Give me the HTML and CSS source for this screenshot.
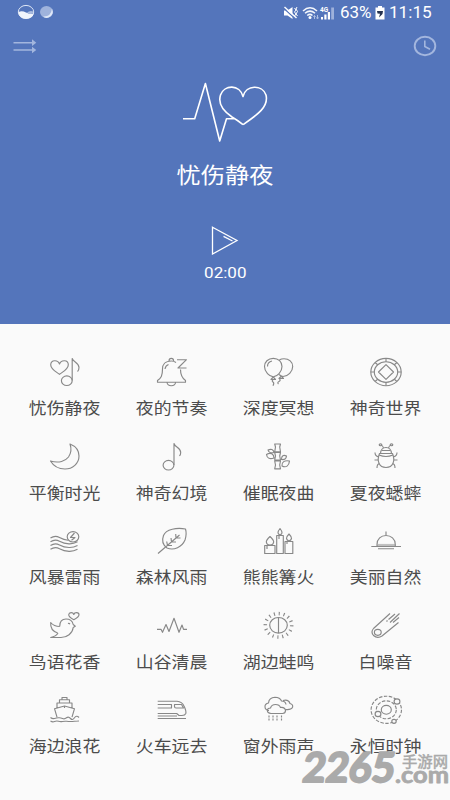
FILE: index.html
```html
<!DOCTYPE html>
<html lang="zh-CN">
<head>
<meta charset="utf-8">
<title>忧伤静夜</title>
<link rel="stylesheet" href="styles.css">
</head>
<body>
<div class="app">
  <header class="hero">
    <div class="status">
      <svg class="status-left" width="40" height="18" viewBox="0 0 40 18">
        <ellipse cx="10" cy="9" rx="7.7" ry="6.6" fill="none" stroke="#dfe7f6" stroke-width="1"/>
        <path d="M2.500 9Q6 7.500 10 9.500Q14 11.500 17.500 10.500Q17 15.500 10 15.800Q3 15.500 2.500 9Z" fill="#f1f5fc"/>
        <path d="M11 9.500Q14 7 17.500 8.500Q17 11.500 14 11Z" fill="#a9bbdf"/>
        <ellipse cx="30.500" cy="9" rx="6.500" ry="6" fill="#9fb3dc"/>
        <path d="M36 5.500Q38.500 12 32.500 14.600Q29 15.500 27 13.500Q35 14 36 5.500Z" fill="#dfe8f8"/>
      </svg>
      <div class="status-right">
        <svg class="status-icons" width="53" height="16" viewBox="0 0 53 16">
          <path d="M1 5.500h3.500L9.500 2v12L4.500 10.500H1Z" fill="#fff"/>
          <path d="M1 3.500L12.500 14" stroke="#5475bb" stroke-width="1.200"/>
          <path d="M1.500 2L13.500 13" stroke="#fff" stroke-width="1.400"/>
          <path d="M11.500 3l1.500 2-1.500 2 1.500 2-1.500 2M14 2l-1 2 1.500 2.500L13 9l1.500 2" fill="none" stroke="#fff" stroke-width="1"/>
          <path d="M20 6Q27 -0.500 34 6M22 8.300Q27 4 32 8.300M24.200 10.500Q27 8.300 29.500 10.500" fill="none" stroke="#f4f7fc" stroke-width="1.500"/>
          <circle cx="27" cy="12.500" r="1.500" fill="#fff"/>
          <path d="M31.500 14V10.500M30.500 12l1 -1.500 1 1.500M34.500 10v3.500M33.500 12.500l1 1.500 1-1.500" fill="none" stroke="#aebfe2" stroke-width="1"/>
          <text x="37" y="6.500" class="network">4G</text>
          <path d="M38 14.500v-2.500h2v2.500zM41.300 14.500V9.500h2.200v5zM44.800 14.500V7h2.200v7.500z" fill="#fff"/>
          <path d="M48.200 14.500V2.500H51v12z" fill="#9eb1db"/>
        </svg>
        <span class="battery-level">63%</span>
        <svg class="battery" width="10" height="14" viewBox="0 0 10 14">
          <path d="M3 0h4v1.500h2.500V13.500H0.500V1.500H3Z" fill="#fff"/>
          <path d="M2 5L8 5L7.500 8L4 11.500L5 7.800L2.500 7.500Z" fill="#26324f"/>
        </svg>
        <span class="clock">11:15</span>
      </div>
    </div>
    <nav class="toolbar">
      <svg width="24" height="16" viewBox="0 0 24 16">
        <path d="M0.500 4.700H20M0.500 12H20" stroke="#a3b6de" stroke-width="1.500"/>
        <path d="M19 1.300L23.300 4.700L19 8ZM19 8.700L23.300 12L19 15.300Z" fill="#a3b6de"/>
      </svg>
      <svg width="24" height="22" viewBox="0 0 24 22">
        <ellipse cx="12" cy="11" rx="10.300" ry="9.300" fill="none" stroke="#a3b6de" stroke-width="1.900"/>
        <path d="M11.800 5.500V11.500L17 14.200" fill="none" stroke="#a3b6de" stroke-width="1.600"/>
      </svg>
    </nav>
    <svg class="pulse" width="90" height="64" viewBox="0 0 90 64">
      <path d="M3 38.700H14.700L25.400 3.500L39.700 61L46.500 38.700H55M63 44.700Q58 40.500 52 37C43 31 38 23 40.500 15C44 4.500 60 4 63 16.500C66 4.500 82.500 4.500 86 15C89 27 77 35 63 44.700"/>
    </svg>
    <h1 class="title">忧伤静夜</h1>
    <svg class="play" width="30" height="30" viewBox="0 0 30 30">
      <path d="M2.500 2.200L27 15.500L2.500 29ZM13.500 11.300L22.500 16"/>
    </svg>
    <div class="time">02:00</div>
  </header>

  <main class="grid">
    <div class="item">
      <svg class="icon" viewBox="0 0 36 32"><path d="M12.500 18.300C8 15 3.700 13 3.700 8.700C4 3.500 11 3.500 12.500 8C14 3.500 21.300 3.500 21.300 8.700C21.300 13 17 15 12.500 18.300ZM25.200 24.500V2.500C26 6 32 6.500 32 11.500Q32 14 30.500 15.500"/><ellipse cx="19.800" cy="24.700" rx="5.400" ry="4.800"/></svg>
      <span class="label">忧伤静夜</span>
    </div>
    <div class="item">
      <svg class="icon" viewBox="0 0 36 32"><path d="M22 6.500Q20 5 17.300 5C11 5 8.500 9 8.500 13C8.500 20 7 22 3.500 24.500V26.200H31.500V24.500C28 22 26.500 19.500 26.500 13.500M15 5Q15 2.300 17.300 2.300T19.600 5M13 26.500Q13.500 29.700 17.300 29.700T21.600 26.500M11 13Q11.500 9.500 14.500 8.500M23 3.700H32.500L24 12H32.500"/></svg>
      <span class="label">夜的节奏</span>
    </div>
    <div class="item">
      <svg class="icon" viewBox="0 0 36 32"><path d="M12.300 2.300C7 2.300 3.500 6 3.500 10.500C3.500 16 8.500 20.800 12.300 20.800S21 16 21 10.500C21 6 17.500 2.300 12.300 2.300ZM18.500 3.800Q20.500 2.700 23 2.700C28 2.700 31.700 6 31.700 10.500C31.700 15.500 27 20.300 22 20.500Q20 20.300 18 18.500M6.500 10.500Q6.500 6 11 5M12.300 21L10 23.500H14.500ZM20 20.500L18 22.500H22.500L20.500 20.500M12 23.500Q10.500 25 12 26T12 29.700M18.500 23Q20 24.500 18 25.500T17.500 28"/></svg>
      <span class="label">深度冥想</span>
    </div>
    <div class="item">
      <svg class="icon" viewBox="0 0 36 32"><ellipse cx="18" cy="16" rx="15.200" ry="13.700"/><ellipse cx="18" cy="16" rx="11.700" ry="10.300"/><path d="M18 8.700L25.500 16L18 23.300L10.500 16ZM18 2.300V5.700M18 26.300V29.700M2.800 16H6.300M29.700 16H33.200M7 6.500L9.700 8.700M29 6.500L26.300 8.700M7 25.500L9.700 23.300M29 25.500L26.300 23.300"/></svg>
      <span class="label">神奇世界</span>
    </div>

    <div class="item">
      <svg class="icon" viewBox="0 0 36 32"><path d="M23 3C28 5 32 9 32 15C32 22.500 25.500 28 18 28C11.500 28 6.500 25 3.500 20C12 22.500 18.500 20 21.500 16Q25.500 10 23 3Z"/></svg>
      <span class="label">平衡时光</span>
    </div>
    <div class="item">
      <svg class="icon" viewBox="0 0 36 32"><path d="M20 24V2.500C21 6.500 26.700 6.500 26.700 11.500Q26.700 13.500 25.500 15"/><ellipse cx="14.500" cy="24.200" rx="5.400" ry="4.800"/></svg>
      <span class="label">神奇幻境</span>
    </div>
    <div class="item">
      <svg class="icon" viewBox="0 0 36 32"><path d="M13.700 3H19.500L18.700 6L19.500 10.800H13.700L14.500 6ZM13.700 11.500H19.500L18.700 15L19.500 19H13.700L14.500 15ZM13.700 20H19.500L18.700 24L19.500 27.800H13.700L14.500 24ZM13 11.500C10 12.500 7.500 11.500 7 9C10 7.500 12.500 8.500 13 11.500ZM13 17C9 18.500 6 17.500 5.500 13.500C9.500 11 13 13 13 17ZM20.500 18.500C20.500 14.500 22.500 13.500 25.500 15C25.300 18 23.500 19 20.500 18.500ZM21 25C20.500 21 23.500 19 28.500 20C28 25 25 27 21 25Z"/></svg>
      <span class="label">催眠夜曲</span>
    </div>
    <div class="item">
      <svg class="icon" viewBox="0 0 36 32"><path d="M11.500 12.500C8.500 20 11 26.500 18 26.500S27.500 20 24.500 12.500ZM12.500 12.500Q13 6.500 18 6.500T23.500 12.500M11 14Q18 17 25 14M14 9.500H22M15.500 7Q15 4.500 12.700 4M20.500 7Q21 4.500 23.300 4M10.500 16Q7 15 7 11.500M25.500 16Q29 15 29 11.500M10.200 19H6.500M25.800 19H29.500M11.500 22.500Q9 23 9 27M24.500 22.500Q27 23 27 27"/><ellipse cx="12.500" cy="3.700" rx="1.300" ry="1"/><ellipse cx="23.500" cy="3.700" rx="1.300" ry="1"/></svg>
      <span class="label">夏夜蟋蟀</span>
    </div>

    <div class="item">
      <svg class="icon" viewBox="0 0 36 32"><path d="M3.500 13Q8 10 12.500 12.500T21 15.200M3.500 16.800Q8 13.800 12.500 16.300T22 18.800Q26.500 19 30.500 16.800M3.500 20.500Q8 17.500 12.500 20T22 22.500Q26.500 22.700 30.500 20.500M3.500 24.300Q8 21.300 12.500 23.800T22 26.300Q26.500 26.500 30.500 24.300M27.500 8L23.500 12.500H28L24.500 15.300"/><ellipse cx="26" cy="11.800" rx="5.800" ry="5.200"/></svg>
      <span class="label">风暴雷雨</span>
    </div>
    <div class="item">
      <svg class="icon" viewBox="0 0 36 32"><path d="M4 28.500L25.500 10M31.500 4C23 2.500 12 4 9.500 10.500C7.500 16 9.500 20.500 13 23C20 26 28 22 31 15Q33 9 31.500 4ZM22 13L21.700 9M22 13L26.500 13M17.500 17L17 13M17.500 17L22 17M13.500 20.500L12.700 16.500M13.500 20.500L18 20.500"/></svg>
      <span class="label">森林风雨</span>
    </div>
    <div class="item">
      <svg class="icon" viewBox="0 0 36 32"><path d="M3.700 20.500H14V28.500H3.700ZM15.700 10.500H22.300V28.500H15.700ZM24 16.500H31.800V28.500H24ZM9 11.500Q12.700 15 12.700 17Q12.300 20 9 20T5.300 17Q5.300 15 9 11.500ZM19 3.500Q21 6 21 7.800Q20.700 9.500 19 9.500T17 7.800Q17 6 19 3.500ZM28 9Q30.500 11.500 30.500 13.500Q30 15.700 28 15.700T25.500 13.500Q25.500 11.500 28 9ZM6 21V24M18 11V14M26 17V19"/></svg>
      <span class="label">熊熊篝火</span>
    </div>
    <div class="item">
      <svg class="icon" viewBox="0 0 36 32"><path d="M3.300 21.500H33M10 23.700H26M9 19.500C9 14 13 10.500 18 10.500S27.300 14 27.300 19.500V21H9ZM18 10.500V6.500"/><path d="M9.500 19.500H27" opacity=".5"/></svg>
      <span class="label">美丽自然</span>
    </div>

    <div class="item">
      <svg class="icon" viewBox="0 0 36 32"><path d="M12.700 16.500C12.500 11.500 15 9 19 9Q25 9 26.200 14.500L28.300 16.200L26.200 17.500C25.500 23.500 20 27.500 14 27.500H3.700Q9 26.500 11 23M10.700 23Q3 20.500 3.700 12.500Q7 16.500 12.700 16.500M26.800 9.700Q21.700 7 21.700 4.800C22 2 26 2 26.800 4.500C27.500 2 32 2 32 4.800Q32 7 26.800 9.700Z"/><path d="M21 13.500Q22 13 23 14"/></svg>
      <span class="label">鸟语花香</span>
    </div>
    <div class="item">
      <svg class="icon" viewBox="0 0 36 32"><path d="M3 19.300H7L8.500 22.300L12 14.500L15 21.500L20 8.300L25 22.300L28 15L29.500 19.300H33"/></svg>
      <span class="label">山谷清晨</span>
    </div>
    <div class="item">
      <svg class="icon" viewBox="0 0 36 32"><ellipse cx="17.500" cy="15.300" rx="8.800" ry="7.800"/><path d="M17.500 7.500V23"/><ellipse class="rays" cx="17.500" cy="15.300" rx="13.200" ry="11.700"/></svg>
      <span class="label">湖边蛙鸣</span>
    </div>
    <div class="item">
      <svg class="icon" viewBox="0 0 36 32"><path d="M5.500 18.500L22 3.500M14 26L30.500 12.500M5.500 18.500Q2.500 22 5.500 25.500Q9.500 29 14 26M20.500 9.500L27 4M22 12.500L31.500 3.500M19.500 10.500L18.500 11.500M25 12.500L31 7.500"/><ellipse cx="9.800" cy="22.300" rx="3.400" ry="3"/></svg>
      <span class="label">白噪音</span>
    </div>

    <div class="item">
      <svg class="icon" viewBox="0 0 36 32"><path d="M10 23.200L7.500 14.700L17.500 12L27.500 14.700L25 23.200M10 13.800V9H25V13.800M12.500 9V5.700H22.500V9M15 5.700V3.500H20V5.700M17.500 12V14M3.500 23.500Q5.500 25 7.500 24.500T11.500 23.800T15.500 24.500T19.500 23.800T23.500 24.500T27.500 23.800T32 23.500M3.500 27Q5.500 28.300 7.500 27.500T11.500 27.300T15.500 27.500T19.500 27.300T23.500 27.500T27.500 27.300T32 27"/></svg>
      <span class="label">海边浪花</span>
    </div>
    <div class="item">
      <svg class="icon" viewBox="0 0 36 32"><path d="M3.700 7.200H23Q28 7.500 30 12Q32.500 17 31.800 19.500Q31 21.500 28 21.500H25L22.700 19.500H3.700M3.700 10.500H17.500V14H3.700M20.500 10.500H27.500L29.500 14H22Q20.500 14 20.500 12.500ZM3.700 22H23M3.700 24.500H32"/></svg>
      <span class="label">火车远去</span>
    </div>
    <div class="item">
      <svg class="icon" viewBox="0 0 36 32"><path d="M8 16.500C3 16 2.500 10 7.500 9Q8 3.500 14 3.300Q19 3.500 20.500 7Q24.500 7 25 10.500M10 19.500C5 19 5.500 14 9.500 14Q10.500 10.500 14.500 10.500Q18.500 10.500 19.500 13.500Q24 13 24.500 16.500Q24.500 19.500 21.500 19.500ZM22 6.500Q27.500 5 29 9.500Q32.500 10.500 31.500 13.500Q30 16 24.800 15.500"/><path class="dots" d="M8 21.500V27.500M12 21.500V27.500M16 21.500V27.500M20.500 21.500V27.500"/></svg>
      <span class="label">窗外雨声</span>
    </div>
    <div class="item">
      <svg class="icon" viewBox="0 0 36 32"><ellipse class="dash" cx="18.300" cy="15.800" rx="15.200" ry="13.600"/><ellipse class="dash" cx="18.300" cy="15.800" rx="10" ry="9"/><ellipse cx="18.300" cy="15.800" rx="5" ry="4.400"/><g class="planet"><ellipse cx="29" cy="7.500" rx="2.900" ry="2.600"/><ellipse cx="10" cy="20" rx="2.900" ry="2.600"/><ellipse cx="26" cy="27.300" rx="2.200" ry="2"/></g></svg>
      <span class="label">永恒时钟</span>
    </div>
  </main>

  <svg class="watermark" width="150" height="44" viewBox="0 0 150 44">
    <text class="wm-num" x="6" y="36" transform="skewX(-7)" textLength="92" lengthAdjust="spacingAndGlyphs">2265</text>
    <text class="wm-cn" x="102" y="20.500" textLength="46" lengthAdjust="spacingAndGlyphs">手游网</text>
    <text class="wm-com" x="95" y="36.500" textLength="54" lengthAdjust="spacingAndGlyphs">.com</text>
  </svg>
</div>
</body>
</html>
```
FILE: styles.css
```css
* { box-sizing: border-box; }

body {
  margin: 0;
  background: #fafafa;
  font-family: Roboto, "Noto Sans CJK SC", sans-serif;
}

.app {
  position: relative;
  width: 450px;
  height: 800px;
  overflow: hidden;
}

.hero {
  display: flex;
  flex-direction: column;
  align-items: center;
  height: 324px;
  background: #5475bb;
  color: #fff;
}

.status {
  display: flex;
  justify-content: space-between;
  width: 100%;
  height: 24px;
  padding: 3px 19px 0 16px;
}

.status-right {
  display: flex;
  align-items: center;
  height: 20px;
  font-size: 16px;
  line-height: 20px;
}

.status-icons { margin-right: 4px; }

.network {
  fill: #fff;
  font-size: 6.5px;
  font-weight: 700;
}

.battery-level {
  width: 35px;
  transform: scaleX(1.06);
  transform-origin: left;
}

.battery { margin-right: 4px; }

.clock {
  width: 42px;
  transform: scaleX(1.07);
  transform-origin: left;
}

.toolbar {
  display: flex;
  align-items: center;
  justify-content: space-between;
  width: 100%;
  height: 22px;
  margin-top: 11px;
  padding: 0 13px;
}

.pulse {
  margin-top: 23px;
  fill: none;
  stroke: #fff;
  stroke-width: 1.6;
  stroke-linejoin: round;
}

.title {
  margin: 17px 0 0;
  font-size: 22px;
  font-weight: 400;
  line-height: 30px;
  transform: scaleX(1.1);
}

.play {
  margin-top: 34px;
  fill: none;
  stroke: #fff;
  stroke-width: 1.3;
}

.time {
  margin-top: 8px;
  font-size: 15.5px;
  line-height: 20px;
  transform: scaleX(1.1);
}

.grid {
  display: grid;
  grid-template-columns: repeat(4, 107px);
  grid-auto-rows: 84.5px;
  padding: 32px 0 0 11px;
}

.item {
  display: flex;
  flex-direction: column;
  align-items: center;
}

.icon {
  width: 36px;
  height: 32px;
  fill: none;
  stroke: #888;
  stroke-width: 1.15;
  stroke-linejoin: round;
}

.rays {
  stroke-width: 3.5;
  stroke-dasharray: 1.1 3.78;
}

.dots { stroke-dasharray: 2 1; }

.dash { stroke-dasharray: 3.5 1.5; }

.planet { fill: #fafafa; }

.label {
  margin-top: 9px;
  color: #4c4c4c;
  font-size: 16.3px;
  line-height: 24px;
  white-space: nowrap;
  transform: scaleX(1.1);
}

.watermark {
  position: absolute;
  left: 300px;
  top: 746px;
  fill: #aaa;
  stroke: #aaa;
}

.wm-num {
  font: 700 41px Lato, sans-serif;
  stroke-width: 2.2;
  stroke-linejoin: round;
}

.wm-cn {
  font: 500 15px "Noto Sans CJK SC", sans-serif;
  stroke-width: .3;
}

.wm-com {
  font: 700 23px Lato, sans-serif;
  stroke-width: .8;
  stroke-linejoin: round;
}
```
